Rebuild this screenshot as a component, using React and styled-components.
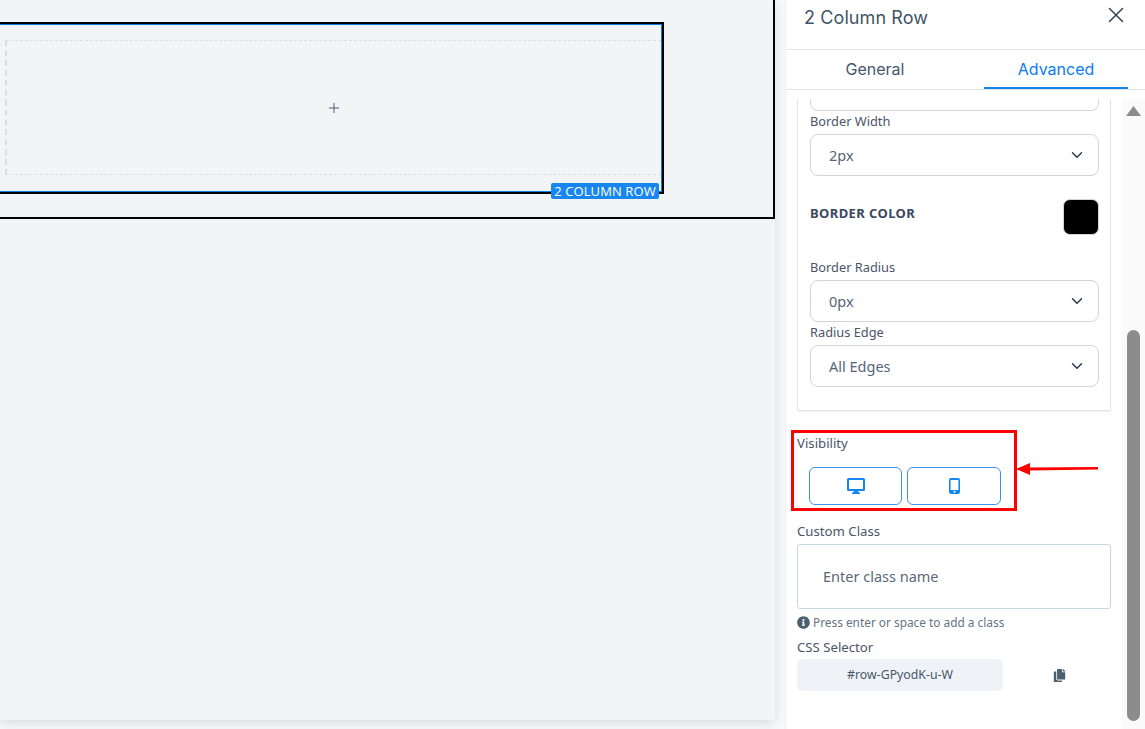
import React from "react";
import styled, { createGlobalStyle } from "styled-components";
import { ChevronDown, Plus, X } from "lucide-react";
import { FaCopy, FaInfoCircle } from "react-icons/fa";

const Global = createGlobalStyle`
  html, body { margin: 0; padding: 0; height: 100%; overflow: hidden; background: #f8f9fa; }
  * { box-sizing: border-box; }
  body { font-family: "Noto Sans", "Open Sans", sans-serif; }
`;
const Page = styled.div`display: flex; width: 1145px; height: 729px; overflow: hidden;`;
const Stage = styled.main`flex: 0 0 785px; height: 729px; padding: 0 10px 9px 0; background: #f8f9fa;`;
const Canvas = styled.div`width: 775px; height: 720px; background: #f3f4f6; box-shadow: 0 3px 12px rgba(0,0,0,.13); overflow: hidden;`;
const Frame = styled.div`
  width: 785px; height: 222px; margin: -3px 0 0 -10px; padding: 23px 0 0 2px;
  border: 2px solid #000;
`;
const Row = styled.div`position: relative; width: 670px; height: 172px; border: 2px solid #000;`;
const RowInner = styled.div`height: 168px; padding: 15px 0 0 8px; border: 1px solid #0a7fe8;`;
const Column = styled.div`
  height: 135px; display: flex; align-items: center; justify-content: center; color: #475569;
  border-top: 1px dashed #dadcec; border-bottom: 1px dashed #dadcec; border-left: 2px dashed #d6dceb;
`;
const Badge = styled.span`
  position: absolute; right: 3px; bottom: -7px; width: 108px; height: 16px; border-radius: 2px;
  background: #1886f0; color: #fff; font: 13px/16px "Open Sans", sans-serif; letter-spacing: .1px; text-align: center; white-space: nowrap;
`;
const Panel = styled.aside`flex: 1; height: 729px; display: flex; flex-direction: column; background: #fff; border-left: 1px solid #eff0f1;`;
const Header = styled.header`
  flex: 0 0 50px; display: flex; justify-content: space-between; padding: 7px 16px 0 18px;
  border-bottom: 1px solid #e5e7eb; color: #3f5566;
`;
const Title = styled.h2`margin: 0; font: 400 18px/22px Inter, sans-serif; letter-spacing: .1px;`;
const Close = styled.span`display: block; margin-top: -5px; color: #34495a; height: 26px;`;
const Tabs = styled.nav`flex: 0 0 39px; display: flex; border-bottom: 1px solid #e2e5e9; padding-right: 17px;`;
const Tab = styled.div`
  flex: ${p => (p.$active ? "0 0 144px" : "0 0 178px")}; margin-left: ${p => (p.$active ? "20px" : "0")};
  text-align: center; font: 400 16px/39px Inter, sans-serif; height: 39px;
  color: ${p => (p.$active ? "#0a7cf0" : "#45586a")};
  border-bottom: ${p => (p.$active ? "2px solid #1583ee" : "none")};
`;
const Body = styled.div`flex: 1; min-height: 0; margin-top: 9px; display: flex; overflow: hidden;`;
const Content = styled.div`flex: 0 0 336px; padding-left: 11px; position: relative;`;
const Card = styled.section`
  width: 314px; height: 312px; padding: 0 11px 0 12px; border: 1px solid #e1e4e8; border-top: 0; border-radius: 0 0 2px 2px;
  box-shadow: 0 1px 1px rgba(0,0,0,.05); overflow: hidden;
`;
const Stub = styled.div`height: 13px; margin-top: -1px; border: 1px solid #d1d5db; border-top: 0; border-radius: 0 0 8px 8px;`;
const Label = styled.label`display: block; color: #4a5568; font-size: 13.2px; line-height: 18px;`;
const Select = styled.div`
  height: 42px; display: flex; align-items: center; justify-content: space-between; padding: 0 12px 0 18px;
  border: 1px solid #d1d5db; border-radius: 8px; color: #566577; font-size: 14.5px;
  svg { color: #2d3a4f; }
`;
const FieldLabel = styled(Label)`font-size: 12.8px; margin: ${p => p.$top}px 0 4px;`;
const ColorRow = styled.div`display: flex; justify-content: space-between; align-items: flex-start; margin: 23px 0 23px;`;
const ColorName = styled.strong`color: #3a4862; font-size: 13px; line-height: 18px; margin-top: 5px; letter-spacing: .4px;`;
const Swatch = styled.div`width: 36px; height: 36px; border-radius: 7px; background: #000; border: 1px solid #d1d5db;`;
const Visibility = styled.section`position: relative; margin-top: 22px; height: 81px;`;
const VisLabel = styled(Label)`padding-top: 1px;`;
const Devices = styled.div`display: flex; gap: 5px; margin: 15px 0 0 12px;`;
const Device = styled.button`
  width: ${p => p.$w}px; height: 38px; display: flex; align-items: center; justify-content: center; padding: 0;
  background: #fff; border: 1px solid #3b93ee; border-radius: 6px; color: #1486f2;
`;
const RedBox = styled.div`position: absolute; left: -6px; top: -3px; width: 226px; height: 81px; border: 3px solid #f00;`;
const Arrow = styled.svg`position: absolute; left: 218px; top: 29px;`;
const ClassLabel = styled(Label)`margin-top: 8px;`;
const ClassInput = styled.div`
  width: 314px; height: 65px; margin-top: 4px; padding: 0 0 2px 25px; display: flex; align-items: center;
  border: 1px solid #c8d6e5; border-radius: 3px; color: #5c6878; font-size: 14.5px;
`;
const Hint = styled.p`display: flex; align-items: center; gap: 3px; margin: 5px 0 0; color: #667382; font-size: 11.85px; line-height: 17px; svg { color: #4b5f6d; }`;
const SelectorLabel = styled(Label)`margin-top: 7px;`;
const SelectorRow = styled.div`display: flex; align-items: center; margin-top: 3px;`;
const Selector = styled.div`width: 206px; height: 32px; border-radius: 6px; background: #eff3f8; color: #48586a; font-size: 12.3px; line-height: 32px; text-align: center;`;
const CopyBtn = styled.span`display: flex; margin: 0 0 0 50px; color: #4b5f6d;`;
const Track = styled.div`flex: 1; position: relative; background: #fafafa;`;
const UpArrow = styled.svg`position: absolute; left: 4px; top: 7px;`;
const Thumb = styled.div`position: absolute; left: 5px; top: 231px; width: 13px; height: 391px; border-radius: 7px; background: #8c8c8c;`;

const Sel = ({ children }) => (
  <Select>{children}<ChevronDown size={18} strokeWidth={2} /></Select>
);

export default function App() {
  return (
    <Page>
      <Global />
      <Stage>
        <Canvas>
          <Frame>
            <Row>
              <RowInner>
                <Column><Plus size={16} strokeWidth={1.4} /></Column>
              </RowInner>
              <Badge>2 COLUMN ROW</Badge>
            </Row>
          </Frame>
        </Canvas>
      </Stage>
      <Panel>
        <Header>
          <Title>2 Column Row</Title>
          <Close><X size={26} strokeWidth={1.4} /></Close>
        </Header>
        <Tabs>
          <Tab>General</Tab>
          <Tab $active>Advanced</Tab>
        </Tabs>
        <Body>
          <Content>
            <Card>
              <Stub />
              <FieldLabel $top={1}>Border Width</FieldLabel>
              <Sel>2px</Sel>
              <ColorRow>
                <ColorName>BORDER COLOR</ColorName>
                <Swatch />
              </ColorRow>
              <FieldLabel $top={0}>Border Radius</FieldLabel>
              <Sel>0px</Sel>
              <FieldLabel $top={1}>Radius Edge</FieldLabel>
              <Sel>All Edges</Sel>
            </Card>
            <Visibility>
              <VisLabel>Visibility</VisLabel>
              <Devices>
                <Device $w={93}>
                  <svg width="18" height="16" viewBox="0 0 18 16">
                    <path fillRule="evenodd" fill="currentColor" d="M1.5 0h15A1.5 1.5 0 0 1 18 1.5v10a1.5 1.5 0 0 1-1.5 1.5H11l.8 1.4h1.2V16H5v-1.6h1.2L7 13H1.5A1.5 1.5 0 0 1 0 11.5v-10A1.5 1.5 0 0 1 1.5 0zM2 2v9h14V2z" />
                  </svg>
                </Device>
                <Device $w={94}>
                  <svg width="11" height="16" viewBox="0 0 11 16">
                    <path fillRule="evenodd" fill="currentColor" d="M2 0h7a2 2 0 0 1 2 2v12a2 2 0 0 1-2 2H2a2 2 0 0 1-2-2V2a2 2 0 0 1 2-2zM1.6 2v10h7.8V2zM5.5 12.8a1 1 0 1 0 0 2 1 1 0 0 0 0-2z" />
                  </svg>
                </Device>
              </Devices>
              <RedBox />
              <Arrow width="84" height="14" viewBox="0 0 84 14">
                <path d="M1 7 L15 1 L15 5.5 L83 5 L83 7.5 L15 8.5 L15 13 Z" fill="#f00" />
              </Arrow>
            </Visibility>
            <ClassLabel>Custom Class</ClassLabel>
            <ClassInput>Enter class name</ClassInput>
            <Hint><FaInfoCircle size={13} />Press enter or space to add a class</Hint>
            <SelectorLabel>CSS Selector</SelectorLabel>
            <SelectorRow>
              <Selector>#row-GPyodK-u-W</Selector>
              <CopyBtn><FaCopy size={13} /></CopyBtn>
            </SelectorRow>
          </Content>
          <Track>
            <UpArrow width="15" height="10" viewBox="0 0 15 10"><path d="M7.5 0 L15 10 H0 Z" fill="#8c8c8c" /></UpArrow>
            <Thumb />
          </Track>
        </Body>
      </Panel>
    </Page>
  );
}
